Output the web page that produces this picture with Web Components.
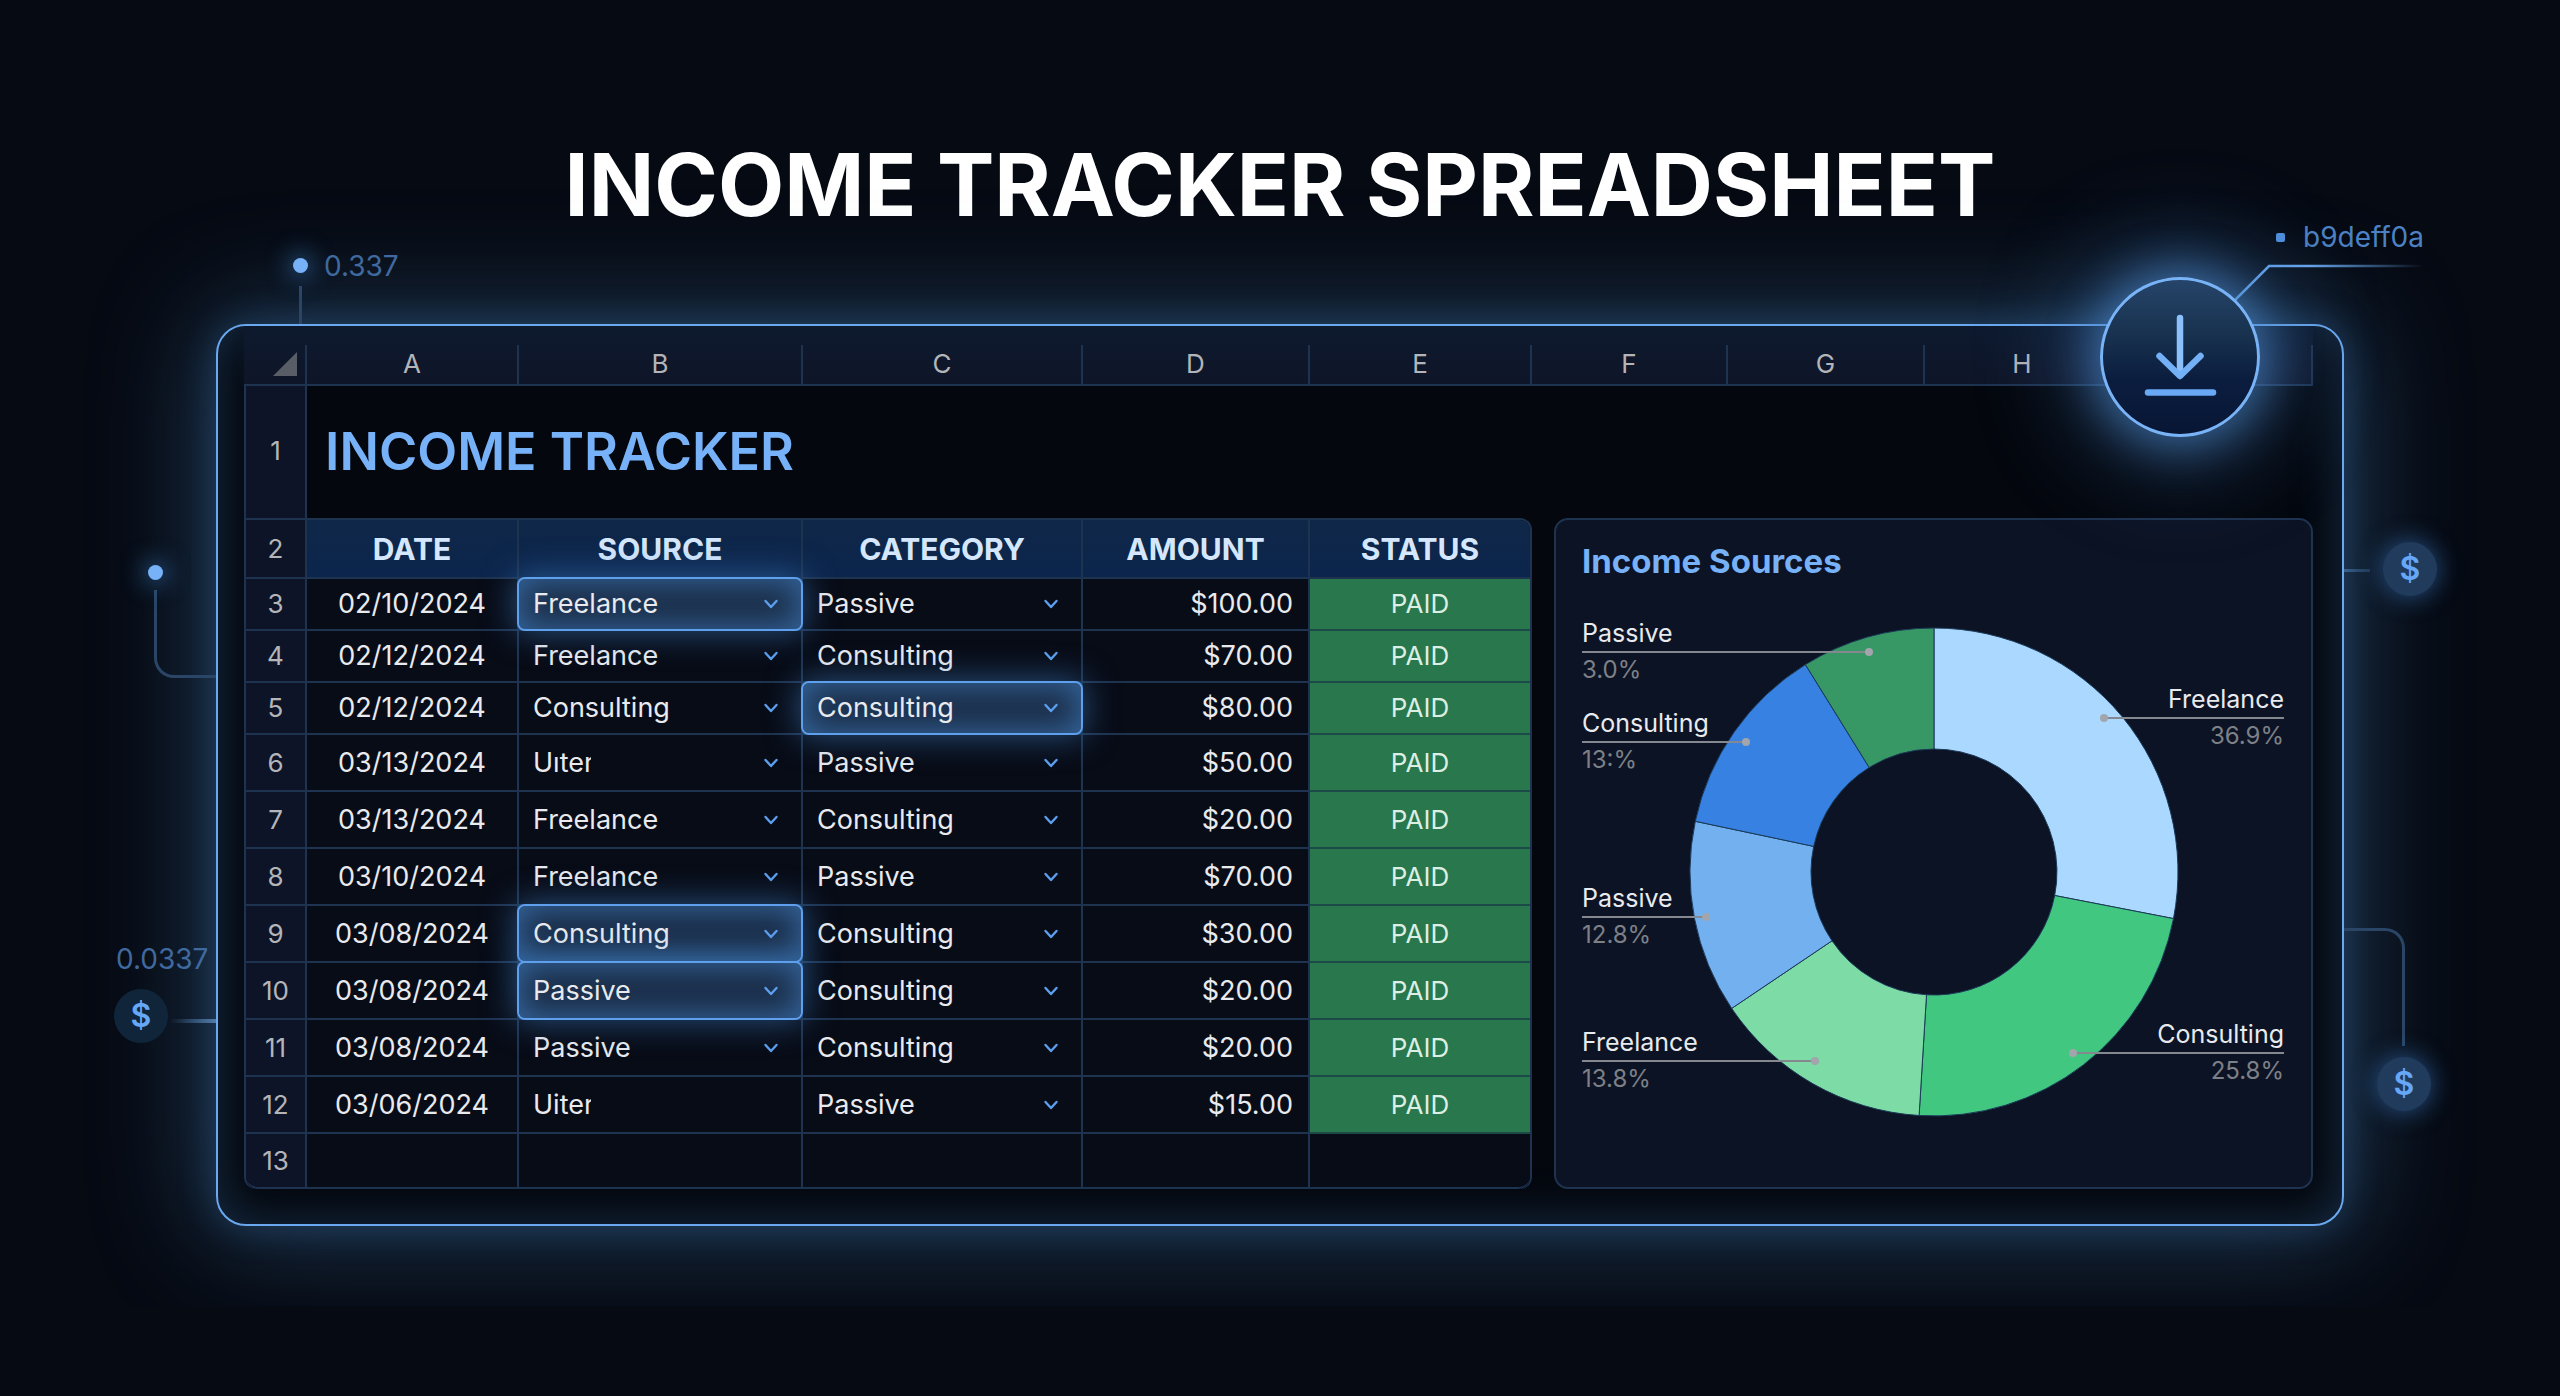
<!DOCTYPE html>
<html lang="en">
<head>
<meta charset="utf-8">
<meta name="viewport" content="width=device-width, initial-scale=1">
<title>Income Tracker Spreadsheet</title>
<style>
  body {
    margin: 0;
    min-height: 100vh;
    background: #060a13;
    color: #e8eaee;
    font-family: Inter, "Liberation Sans", sans-serif;
    font-size: 26px;
    line-height: 32px;
    --line: #1e3350;
    --accent: #5e9fee;
    --accent-soft: #77b1f7;
    --muted: #b3b5b9;
    --side: #0d1427;
  }
</style>
</head>
<body>
<tracker-page></tracker-page>

<script>
class TrackerPage extends HTMLElement {

  constructor() {
    super();
    this.shadow = this.attachShadow({mode: 'open'});
  }

  connectedCallback() {
    this.shadow.innerHTML = `
      <style>
        :host {
          display: block;
          padding: 133px 216px 80px;
          overflow: hidden;
        }
        h1 {
          margin: 0 0 87px;
          color: #fff;
          font-size: 86px;
          font-weight: 700;
          line-height: 104px;
          text-align: center;
        }
        .stage {
          position: relative;
        }
        signal-node, signal-wire, download-button, hash-callout {
          position: absolute;
        }
        .top-dot { left: 77px; top: -66px; }
        .top-wire { left: 83px; top: -38px; height: 38px; }
        .left-dot { left: -68px; top: 241px; }
        .left-wire { left: -62px; top: 266px; width: 62px; height: 88px; }
        .left-value { left: -100px; top: 619px; }
        .left-coin { left: -102px; top: 665px; }
        .left-lead { left: -46px; top: 695px; width: 46px; }
        .right-coin { right: -93px; top: 218px; }
        .right-lead { right: -26px; top: 245px; width: 26px; }
        .low-wire { right: -61px; top: 604px; width: 61px; height: 118px; }
        .low-coin { right: -87px; top: 733px; }
        download-button { right: 84px; top: -47px; }
        hash-callout { right: -80px; top: -103px; }
      </style>
      <h1><slot name="title">INCOME TRACKER SPREADSHEET</slot></h1>
      <div class="stage">
        <sheet-panel></sheet-panel>
        <signal-wire class="top-wire" kind="line"></signal-wire>
        <signal-node class="top-dot" kind="dot">0.337</signal-node>
        <signal-wire class="left-wire" kind="down-right"></signal-wire>
        <signal-node class="left-dot" kind="dot"></signal-node>
        <signal-node class="left-value" kind="text">0.0337</signal-node>
        <signal-wire class="left-lead" kind="lead-left"></signal-wire>
        <signal-node class="left-coin" kind="coin" dim>$</signal-node>
        <signal-wire class="right-lead" kind="lead-right"></signal-wire>
        <signal-node class="right-coin" kind="coin">$</signal-node>
        <signal-wire class="low-wire" kind="right-down"></signal-wire>
        <signal-node class="low-coin" kind="coin">$</signal-node>
        <hash-callout>b9deff0a</hash-callout>
        <download-button></download-button>
      </div>
    `;
  }
}

class SheetPanel extends HTMLElement {

  constructor() {
    super();
    this.shadow = this.attachShadow({mode: 'open'});
  }

  connectedCallback() {
    this.shadow.innerHTML = `
      <style>
        :host {
          display: block;
          padding: 0 29px 35px 26px;
          border: 2px solid #6aa8f0;
          border-radius: 30px;
          background: #04070e;
          box-shadow:
            0 0 110px 14px rgba(60, 112, 156, 0.46),
            0 0 36px rgba(58, 120, 186, 0.34),
            inset 0 0 50px rgba(58, 116, 172, 0.36);
        }
        .title-row {
          display: grid;
          grid-template-columns: 63fr 2006fr;
          height: 132px;
        }
        .num {
          display: flex;
          align-items: center;
          justify-content: center;
          padding-bottom: 2px;
          border: solid var(--line);
          border-width: 0 2px;
          background: var(--side);
          color: var(--muted);
        }
        h2 {
          margin: 0;
          padding-left: 18px;
          align-self: center;
          color: var(--accent-soft);
          font-size: 52px;
          font-weight: 600;
          line-height: 64px;
        }
        .body {
          display: grid;
          grid-template-columns: minmax(0, 1288fr) minmax(0, 759fr);
          gap: 22px;
        }
      </style>
      <column-strip></column-strip>
      <div class="title-row">
        <div class="num">1</div>
        <h2>INCOME TRACKER</h2>
      </div>
      <div class="body">
        <income-table></income-table>
        <source-chart></source-chart>
      </div>
    `;
  }
}

class ColumnStrip extends HTMLElement {

  constructor() {
    super();
    this.shadow = this.attachShadow({mode: 'open'});
  }

  connectedCallback() {
    const letters = ["A", "B", "C", "D", "E", "F", "G", "H", ""];
    this.shadow.innerHTML = `
      <style>
        :host {
          display: grid;
          grid-template-columns: 63fr 212fr 284fr 280fr 227fr 222fr 196fr 197fr 196fr 192fr;
          box-sizing: border-box;
          height: 60px;
          padding-top: 19px;
          border-bottom: 2px solid var(--line);
          background: linear-gradient(#0d1a2e, #0f1528);
          box-shadow: 0 0 12px #0e1629;
          clip-path: inset(0 -12px 0 -12px);
          color: var(--muted);
        }
        div {
          display: flex;
          align-items: center;
          justify-content: center;
          padding-bottom: 2px;
          border-right: 2px solid var(--line);
        }
        .corner {
          align-items: flex-end;
          justify-content: flex-end;
          padding: 0 8px 8px 0;
        }
        svg {
          display: block;
        }
      </style>
      <div class="corner">
        <svg width="24" height="24" viewBox="0 0 24 24" aria-hidden="true"><path d="M24 0V24H0Z" fill="#595d65"/></svg>
      </div>
      ${letters.map(l => `<div>${l}</div>`).join("")}
    `;
  }
}

const ROWS = [
  {n: 3, date: "02/10/2024", source: "Freelance", category: "Passive", amount: "$100.00", hot: "source"},
  {n: 4, date: "02/12/2024", source: "Freelance", category: "Consulting", amount: "$70.00"},
  {n: 5, date: "02/12/2024", source: "Consulting", category: "Consulting", amount: "$80.00", hot: "category"},
  {n: 6, date: "03/13/2024", source: "Uıter", category: "Passive", amount: "$50.00", flags: "clipped"},
  {n: 7, date: "03/13/2024", source: "Freelance", category: "Consulting", amount: "$20.00"},
  {n: 8, date: "03/10/2024", source: "Freelance", category: "Passive", amount: "$70.00"},
  {n: 9, date: "03/08/2024", source: "Consulting", category: "Consulting", amount: "$30.00", hot: "source"},
  {n: 10, date: "03/08/2024", source: "Passive", category: "Consulting", amount: "$20.00", hot: "source"},
  {n: 11, date: "03/08/2024", source: "Passive", category: "Consulting", amount: "$20.00"},
  {n: 12, date: "03/06/2024", source: "Uiter", category: "Passive", amount: "$15.00", flags: "clipped bare"}
];

class IncomeTable extends HTMLElement {

  constructor() {
    super();
    this.shadow = this.attachShadow({mode: 'open'});
  }

  row(r) {
    const hot = (name) => r.hot === name ? "active" : "";
    return `
      <tr class="${r.n < 6 ? "short" : ""}">
        <th scope="row">${r.n}</th>
        <td class="date">${r.date}</td>
        <td><cell-select value="${r.source}" label="Source, row ${r.n}" ${hot("source")} ${r.flags || ""}></cell-select></td>
        <td><cell-select value="${r.category}" label="Category, row ${r.n}" ${hot("category")}></cell-select></td>
        <td class="amount">${r.amount}</td>
        <td class="paid">PAID</td>
      </tr>
    `;
  }

  connectedCallback() {
    this.shadow.innerHTML = `
      <style>
        :host {
          display: block;
          border: solid var(--line);
          border-width: 2px 2px 0;
          border-radius: 0 12px 12px 12px;
          overflow: hidden;
        }
        table {
          width: 100%;
          table-layout: fixed;
          border-collapse: separate;
          border-spacing: 0;
        }
        th, td {
          box-sizing: border-box;
          height: 57px;
          padding: 0;
          border: solid var(--line);
          border-width: 0 2px 2px 0;
          background: #080c17;
          font-size: 27px;
          font-weight: 400;
        }
        tr > :last-child {
          border-right: 0;
        }
        thead th {
          height: 59px;
        }
        thead th[scope=col] {
          background: linear-gradient(#0f2748, #0c254c);
          color: #d5e7fc;
          font-size: 30px;
          font-weight: 700;
        }
        th[scope=row] {
          background: var(--side);
          color: var(--muted);
          font-size: 26px;
        }
        .short > * {
          height: 52px;
        }
        .blank > * {
          height: 55px;
        }
        .blank > :first-child {
          border-radius: 0 0 0 12px;
        }
        .blank > :last-child {
          border-radius: 0 0 12px 0;
        }
        .date {
          text-align: center;
        }
        .amount {
          padding-right: 15px;
          text-align: right;
        }
        .paid {
          background: #29774c;
          border-color: #1c4a48;
          color: #dcefe4;
          font-size: 26px;
          text-align: center;
        }
      </style>
      <table>
        <colgroup>
          <col style="width: 61px"><col style="width: 212px"><col style="width: 284px">
          <col style="width: 280px"><col style="width: 227px"><col style="width: 220px">
        </colgroup>
        <thead>
          <tr>
            <th scope="row">2</th>
            <th scope="col">DATE</th>
            <th scope="col">SOURCE</th>
            <th scope="col">CATEGORY</th>
            <th scope="col">AMOUNT</th>
            <th scope="col">STATUS</th>
          </tr>
        </thead>
        <tbody>
          ${ROWS.map(r => this.row(r)).join("")}
          <tr class="blank"><th scope="row">13</th><td></td><td></td><td></td><td></td><td></td></tr>
        </tbody>
      </table>
    `;
  }
}

class CellSelect extends HTMLElement {

  constructor() {
    super();
    this.shadow = this.attachShadow({mode: 'open'});
  }

  connectedCallback() {
    const value = this.getAttribute("value");
    const options = ["Freelance", "Consulting", "Passive"];
    if (!options.includes(value)) {
      options.push(value);
    }
    this.shadow.innerHTML = `
      <style>
        :host {
          display: grid;
          grid-template-columns: 1fr;
          align-items: center;
          height: 100%;
        }
        select, svg {
          grid-area: 1 / 1;
        }
        select {
          appearance: none;
          width: 100%;
          height: 100%;
          margin: 0;
          padding: 0 48px 0 14px;
          border: 0;
          background: none;
          color: #e8eaee;
          font: inherit;
          outline: none;
        }
        option {
          background: #0d1427;
        }
        svg {
          justify-self: end;
          margin-right: 22px;
          pointer-events: none;
        }
        :host([clipped]) select {
          clip-path: inset(0 calc(100% - 72px) 0 0);
        }
        :host([bare]) svg {
          display: none;
        }
        :host([active]) {
          position: relative;
          z-index: 1;
          border-radius: 6px;
          background: #1a2c46;
          box-shadow:
            0 0 0 2px var(--accent),
            0 0 32px 4px rgba(62, 130, 200, 0.55),
            inset 0 0 30px 4px rgba(62, 124, 190, 0.7);
        }
      </style>
      <select aria-label="${this.getAttribute("label")}">
        ${options.map(o => `<option${o === value ? " selected" : ""}>${o}</option>`).join("")}
      </select>
      <svg width="16" height="12" viewBox="0 0 16 12" fill="none" stroke="#5c9fee" stroke-width="2.4" stroke-linecap="round" stroke-linejoin="round" aria-hidden="true"><path d="M2.5 3L8 9L13.5 3"/></svg>
    `;
  }
}

// angles in degrees, clockwise from the top
const SLICES = [
  {from: 0, to: 101, color: "#abd8ff"},
  {from: 101, to: 183.5, color: "#41c77f"},
  {from: 183.5, to: 236, color: "#7ddba5"},
  {from: 236, to: 282, color: "#72b0f0"},
  {from: 282, to: 328.2, color: "#3681e1"},
  {from: 328.2, to: 360, color: "#379866"}
];

const CALLOUTS = [
  {name: "Passive", share: "3.0%", y: 52, dot: 287},
  {name: "Consulting", share: "13:%", y: 142, dot: 164},
  {name: "Passive", share: "12.8%", y: 317, dot: 124},
  {name: "Freelance", share: "13.8%", y: 461, dot: 233},
  {name: "Freelance", share: "36.9%", y: 118, dot: 522, right: true},
  {name: "Consulting", share: "25.8%", y: 453, dot: 491, right: true}
];

class SourceChart extends HTMLElement {

  constructor() {
    super();
    this.shadow = this.attachShadow({mode: 'open'});
  }

  point(angle, radius) {
    const a = angle * Math.PI / 180;
    return (352 + radius * Math.sin(a)).toFixed(1) + " " + (272 - radius * Math.cos(a)).toFixed(1);
  }

  slice(s) {
    return `<path class="slice" fill="${s.color}" d="M${this.point(s.from, 244)}
      A244 244 0 0 1 ${this.point(s.to, 244)}
      L${this.point(s.to, 123)}
      A123 123 0 0 0 ${this.point(s.from, 123)}Z"/>`;
  }

  callout(c) {
    const edge = c.right ? 702 : 0;
    const anchor = c.right ? "end" : "start";
    return `
      <path class="lead" d="M${edge} ${c.y}H${c.dot}"/>
      <circle cx="${c.dot}" cy="${c.y}" r="4" fill="#a2a5ab"/>
      <text x="${edge}" y="${c.y - 10}" text-anchor="${anchor}">${c.name}</text>
      <text class="share" x="${edge}" y="${c.y + 26}" text-anchor="${anchor}">${c.share}</text>
    `;
  }

  connectedCallback() {
    this.shadow.innerHTML = `
      <style>
        :host {
          display: block;
          box-sizing: border-box;
          padding: 21px 27px 0 26px;
          border: 2px solid var(--line);
          border-radius: 14px;
          background: #0c1324;
        }
        h3 {
          margin: 0 0 19px;
          color: var(--accent-soft);
          font-size: 33px;
          font-weight: 700;
          line-height: 40px;
        }
        svg {
          display: block;
          width: 100%;
          overflow: visible;
        }
        .slice {
          stroke: #1b3a58;
          stroke-width: 1;
        }
        .lead {
          stroke: #85888f;
          stroke-width: 2;
        }
        text {
          fill: #e8eaee;
          font-size: 25px;
        }
        .share {
          fill: #7d8087;
          font-size: 24px;
        }
      </style>
      <h3>Income Sources</h3>
      <svg viewBox="0 0 702 540" role="img" aria-label="Income by source">
        ${SLICES.map(s => this.slice(s)).join("")}
        ${CALLOUTS.map(c => this.callout(c)).join("")}
      </svg>
    `;
  }
}

// glowing dot, plain value or round coin beside the panel
class SignalNode extends HTMLElement {

  constructor() {
    super();
    this.shadow = this.attachShadow({mode: 'open'});
  }

  connectedCallback() {
    this.shadow.innerHTML = `
      <style>
        :host {
          display: flex;
          align-items: center;
          gap: 16px;
          color: #40699f;
          font-size: 28px;
        }
        :host([kind=dot])::before {
          content: "";
          width: 15px;
          height: 15px;
          border-radius: 50%;
          background: var(--accent-soft);
          box-shadow: 0 0 22px 5px rgba(62, 134, 210, 0.5);
        }
        :host([kind=dot]) {
          height: 15px;
        }
        :host([kind=coin]) {
          justify-content: center;
          width: 54px;
          height: 54px;
          border-radius: 50%;
          background: #213b5d;
          box-shadow: 0 0 22px 3px rgba(52, 112, 180, 0.55);
          color: #66a8f7;
          font-size: 32px;
          font-weight: 600;
        }
        :host([dim]) {
          background: #11253a;
          box-shadow: none;
        }
      </style>
      <slot></slot>
    `;
  }
}

class SignalWire extends HTMLElement {

  constructor() {
    super();
    this.shadow = this.attachShadow({mode: 'open'});
  }

  connectedCallback() {
    this.shadow.innerHTML = `
      <style>
        :host {
          display: block;
          box-sizing: border-box;
          border: 0 solid #2a4566;
        }
        :host([kind=line]) {
          border-left-width: 3px;
        }
        :host([kind=down-right]) {
          border-width: 0 0 3px 3px;
          border-radius: 0 0 0 20px;
        }
        :host([kind=right-down]) {
          border-width: 3px 3px 0 0;
          border-radius: 0 20px 0 0;
        }
        :host([kind=lead-left]) {
          height: 4px;
          background: linear-gradient(90deg, transparent, #4f7aa8);
        }
        :host([kind=lead-right]) {
          height: 3px;
          background: linear-gradient(90deg, #3a628f, #1f3854);
        }
      </style>
    `;
  }
}

class HashCallout extends HTMLElement {

  constructor() {
    super();
    this.shadow = this.attachShadow({mode: 'open'});
  }

  connectedCallback() {
    this.shadow.innerHTML = `
      <style>
        :host {
          display: block;
          width: 190px;
          color: #4c82c4;
          font-size: 28px;
        }
        .text {
          display: flex;
          align-items: center;
          justify-content: flex-end;
          gap: 18px;
        }
        .text::before {
          content: "";
          width: 9px;
          height: 9px;
          border-radius: 2px;
          background: #4f90de;
        }
        svg {
          display: block;
          margin-top: 10px;
        }
      </style>
      <div class="text"><slot></slot></div>
      <svg width="190" height="40" viewBox="0 0 190 40" fill="none" aria-hidden="true">
        <defs>
          <linearGradient id="fade" gradientUnits="userSpaceOnUse" x1="0" y1="0" x2="190" y2="0">
            <stop offset="0.4" stop-color="#68a6ee"/>
            <stop offset="1" stop-color="#68a6ee" stop-opacity="0"/>
          </linearGradient>
        </defs>
        <path d="M0 38L35 3H190" stroke="url(#fade)" stroke-width="2.5"/>
      </svg>
    `;
  }
}

class DownloadButton extends HTMLElement {

  constructor() {
    super();
    this.shadow = this.attachShadow({mode: 'open'});
  }

  connectedCallback() {
    this.shadow.innerHTML = `
      <style>
        :host {
          display: block;
        }
        button {
          display: block;
          width: 160px;
          height: 160px;
          padding: 0;
          border: 3px solid #78b3f8;
          border-radius: 50%;
          background: linear-gradient(#26446a, #18324f 35%, #0b1d3f 65%, #081634);
          box-shadow:
            0 0 44px 8px rgba(84, 150, 222, 0.55),
            0 0 90px 34px rgba(60, 112, 172, 0.42);
          cursor: pointer;
        }
        svg {
          display: block;
        }
      </style>
      <button type="button" aria-label="Download">
        <svg width="154" height="154" viewBox="3 3 154 154" fill="none" stroke-width="6.5" stroke-linecap="round" stroke-linejoin="round" aria-hidden="true">
          <path d="M80 41V98" stroke="#8cc0fb"/>
          <path d="M59.5 79L80 99L100.5 79" stroke="#74b0f6"/>
          <path d="M48 115.5H113" stroke="#68a8f4"/>
        </svg>
      </button>
    `;
  }
}

window.customElements.define('cell-select', CellSelect);
window.customElements.define('column-strip', ColumnStrip);
window.customElements.define('income-table', IncomeTable);
window.customElements.define('source-chart', SourceChart);
window.customElements.define('sheet-panel', SheetPanel);
window.customElements.define('signal-node', SignalNode);
window.customElements.define('signal-wire', SignalWire);
window.customElements.define('hash-callout', HashCallout);
window.customElements.define('download-button', DownloadButton);
window.customElements.define('tracker-page', TrackerPage);
</script>
</body>
</html>
